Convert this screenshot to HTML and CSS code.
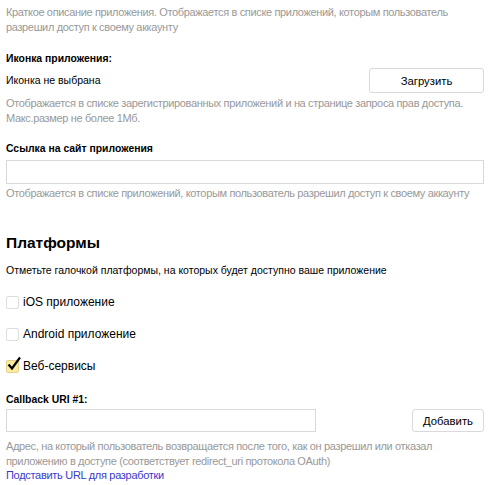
FILE: index.html
```html
<!DOCTYPE html>
<html lang="ru">
<head>
<meta charset="utf-8">
<link rel="stylesheet" href="styles.css">
</head>
<body>
<div class="page">
  <p class="hint first">Краткое описание приложения. Отображается в списке приложений, которым пользователь разрешил доступ к своему аккаунту</p>

  <div class="label l-icon">Иконка приложения:</div>
  <div class="row">
    <span class="plain">Иконка не выбрана</span>
    <button class="btn btn-upload">Загрузить</button>
  </div>
  <p class="hint h-icon">Отображается в списке зарегистрированных приложений и на странице запроса прав доступа. Макс.размер не более 1Мб.</p>

  <div class="label l-site">Ссылка на сайт приложения</div>
  <div class="input full"></div>
  <p class="hint h-site">Отображается в списке приложений, которым пользователь разрешил доступ к своему аккаунту</p>

  <h2 class="heading">Платформы</h2>
  <p class="plain note">Отметьте галочкой платформы, на которых будет доступно ваше приложение</p>

  <div class="checks">
    <label class="check"><span class="box"></span><span>iOS приложение</span></label>
    <label class="check"><span class="box"></span><span>Android приложение</span></label>
    <label class="check"><span class="box on"><svg viewBox="0 0 16 16" width="16" height="16"><path d="M2.5 8.5 L6 12.5 L14 1.5" fill="none" stroke="#000" stroke-width="2.2" stroke-linejoin="miter"/></svg></span><span>Веб-сервисы</span></label>
  </div>

  <div class="label l-cb">Callback URI #1:</div>
  <div class="row">
    <div class="input half"></div>
    <button class="btn btn-add">Добавить</button>
  </div>
  <p class="hint h-cb">Адрес, на который пользователь возвращается после того, как он разрешил или отказал приложению в доступе (соответствует redirect_uri протокола OAuth)</p>
  <a class="link" href="#">Подставить URL для разработки</a>
</div>
</body>
</html>
```

FILE: styles.css
```css
* { box-sizing: border-box; }
html, body { margin: 0; padding: 0; background: #fff; }
body {
  font-family: "Liberation Sans", Arial, sans-serif;
  font-size: 11px;
  color: #000;
}
.page {
  padding: 5px 10px 0 6px;
  width: 494px;
}
p { margin: 0; }
.hint {
  color: #999;
  font-size: 11px;
  letter-spacing: -0.35px;
  line-height: 15px;
}
.label {
  font-weight: bold;
  font-size: 10.4px;
  line-height: 15px;
}
.plain { font-size: 10.5px; line-height: 15px; }
.l-icon { margin-top: 16px; }
.row {
  display: flex;
  align-items: center;
  justify-content: space-between;
  margin-top: 2px;
}
.btn {
  font-family: "Liberation Sans", Arial, sans-serif;
  font-size: 11.3px;
  color: #000;
  background: #fff;
  border: 1px solid #d9d9d9;
  border-radius: 3px;
  height: 25px;
  padding: 0;
}
.btn-upload { width: 115px; }
.btn-add { width: 72px; height: 23px; }
.h-icon { margin-top: 3px; }
.l-site { margin-top: 15px; }
.input {
  border: 1px solid #d9d9d9;
  height: 24px;
  background: #fff;
}
.full { margin-top: 4px; width: 478px; }
.half { width: 310px; height: 23px; }
.h-site { margin-top: 2px; }
.heading {
  margin: 31px 0 0;
  font-size: 15.5px;
  line-height: 22px;
  font-weight: bold;
}
.note { margin-top: 9px; }
.checks {
  display: flex;
  flex-direction: column;
  gap: 12px;
  margin-top: 14px;
}
.check {
  display: flex;
  align-items: center;
  gap: 4px;
  height: 20px;
  font-size: 12px;
}
.box {
  position: relative;
  width: 13px;
  height: 13px;
  border: 1px solid #ddd;
  border-radius: 2px;
  background: #fff;
  flex: none;
}
.box.on {
  background: #ffeba0;
  border-color: #e2d28a;
}
.box svg {
  position: absolute;
  left: -1px;
  top: -5px;
}
.l-cb { margin-top: 16px; }
.h-cb { margin-top: 7px; }
.link {
  display: block;
  color: #3a3acc;
  text-decoration: none;
  font-size: 11px;
  letter-spacing: -0.3px;
  line-height: 12px;
  margin-top: 0;
}
```
